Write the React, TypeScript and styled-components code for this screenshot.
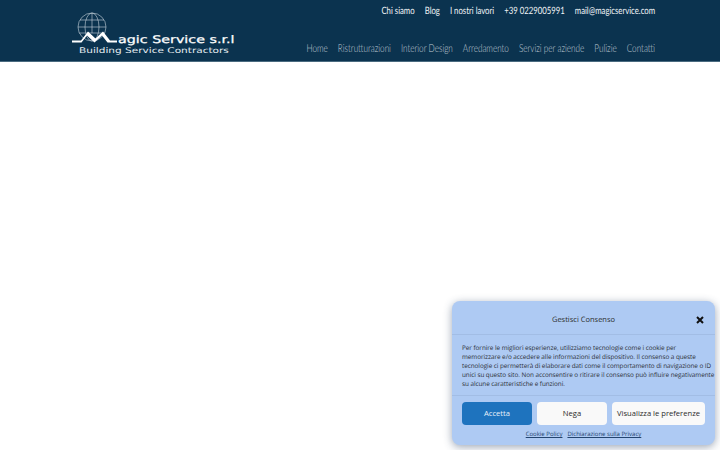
import { createGlobalStyle, styled } from 'styled-components';

const GlobalStyle = createGlobalStyle`
  html, body {
    margin: 0;
    padding: 0;
    background: #fff;
    height: 100%;
    text-rendering: geometricPrecision;
  }
  #root {
    height: 100%;
  }
`;

const Page = styled.div`
  position: relative;
  width: 720px;
  height: 450px;
  overflow: hidden;
  background: #fff;
`;

const Header = styled.header`
  height: 61px;
  background: #0b334f;
  border-bottom: 1px solid #4a6b80;
  padding: 0 65px 0 71px;
  display: flex;
  justify-content: space-between;
`;

const Logo = styled.div`
  flex: 0 0 168px;
  height: 46px;
  margin-top: 12px;
  position: relative;
  color: #fff;
`;

const LogoMark = styled.svg`
  position: absolute;
  left: 0;
  top: 0;
`;

const LogoName = styled.div`
  position: absolute;
  left: 47px;
  top: 21px;
  font: 400 10.5px/15px 'DejaVu Sans', sans-serif;
  -webkit-text-stroke: 0.25px #fff;
  white-space: nowrap;
  transform: scaleX(1.36);
  transform-origin: left center;
`;

const LogoTag = styled.div`
  position: absolute;
  left: 8px;
  top: 33px;
  font: 400 7.8px/12px 'DejaVu Sans', sans-serif;
  white-space: nowrap;
  color: #e6edf2;
  transform: scaleX(1.35);
  transform-origin: left center;
`;

const Navs = styled.div`
  flex: 1;
  min-width: 0;
  display: flex;
  flex-direction: column;
  align-items: flex-end;
`;

const TopNav = styled.nav`
  display: flex;
  gap: 13px;
  margin-top: 4px;
  transform: scaleX(0.775);
  transform-origin: right center;
`;

const TopLink = styled.a`
  font: 400 10px/15px 'Lato', sans-serif;
  color: #f2f5f7;
  white-space: nowrap;
`;

const MainNav = styled.nav`
  display: flex;
  flex-shrink: 0;
  gap: 13.5px;
  margin-top: 21px;
  transform: scaleX(0.74);
  transform-origin: right center;
`;

const MainLink = styled.a`
  font: 300 11px/17px 'Lato', sans-serif;
  color: #c4d0d9;
  white-space: nowrap;
`;

const Banner = styled.section`
  position: absolute;
  left: 452px;
  top: 301px;
  width: 263px;
  height: 144px;
  background: #aecaf3;
  border-radius: 8px;
  box-shadow: 0 2px 8px rgba(40, 60, 90, 0.45);
  font-family: 'Open Sans', sans-serif;
  color: #222;
`;

const BannerHead = styled.div`
  height: 34px;
  padding-top: 5px;
  box-sizing: border-box;
  border-bottom: 1px solid #a2bde5;
  display: flex;
  align-items: center;
  justify-content: center;
  position: relative;
  font-size: 7.5px;
  color: #2a2a2a;
`;

const CloseIcon = styled.svg`
  position: absolute;
  right: 11px;
  top: 15px;
`;

const BannerText = styled.p`
  margin: 0;
  padding: 8px 0 6px 10px;
  height: 46px;
  font-size: 6.35px;
  line-height: 9.1px;
  letter-spacing: -0.04px;
  white-space: nowrap;
  color: #2b2f36;
  border-bottom: 1px solid #a2bde5;
`;

const Actions = styled.div`
  display: grid;
  grid-template-columns: 70px 70px 93px;
  gap: 5px;
  padding: 6px 10px 0;
`;

const Action = styled.button<{ $primary?: boolean }>`
  height: 23px;
  border: 0;
  border-radius: 4px;
  padding: 0 0 1px;
  font: 400 7.6px 'Open Sans', sans-serif;
  background: ${(p) => (p.$primary ? '#1e73be' : '#f9f9f9')};
  color: ${(p) => (p.$primary ? '#e8f1fa' : '#2a2a2a')};
`;

const Links = styled.div`
  display: flex;
  justify-content: center;
  gap: 5px;
  margin-top: 4px;
`;

const PolicyLink = styled.a`
  font-size: 6px;
  line-height: 10px;
  color: #23446f;
  text-decoration: underline;
`;

export default function App() {
  return (
    <Page>
      <GlobalStyle />
      <Header>
        <Logo>
          <LogoMark width="60" height="34" viewBox="0 0 60 34" fill="none">
            <g stroke="#c9d5dd" strokeWidth="0.6">
              <circle cx="21" cy="15" r="14" />
              <ellipse cx="21" cy="15" rx="7" ry="14" />
              <path d="M21 1v20M7 15h28M9 8h24M8 21h26" />
            </g>
            <path
              d="M1 28.4h9l7-9 7.5 7 7.5-7 7 9h7v2h-9.5l-5.5-7-7.5 7-7.5-7-5.5 7H1z"
              fill="#fff"
            />
          </LogoMark>
          <LogoName>agic Service s.r.l</LogoName>
          <LogoTag>Building Service Contractors</LogoTag>
        </Logo>
        <Navs>
          <TopNav>
            <TopLink>Chi siamo</TopLink>
            <TopLink>Blog</TopLink>
            <TopLink>I nostri lavori</TopLink>
            <TopLink>+39 0229005991</TopLink>
            <TopLink>mail@magicservice.com</TopLink>
          </TopNav>
          <MainNav>
            <MainLink>Home</MainLink>
            <MainLink>Ristrutturazioni</MainLink>
            <MainLink>Interior Design</MainLink>
            <MainLink>Arredamento</MainLink>
            <MainLink>Servizi per aziende</MainLink>
            <MainLink>Pulizie</MainLink>
            <MainLink>Contatti</MainLink>
          </MainNav>
        </Navs>
      </Header>
      <Banner>
        <BannerHead>
          Gestisci Consenso
          <CloseIcon width="8" height="8" viewBox="0 0 8 8">
            <path d="M1 1l6 6M7 1L1 7" stroke="#111" strokeWidth="2" />
          </CloseIcon>
        </BannerHead>
        <BannerText>
          Per fornire le migliori esperienze, utilizziamo tecnologie come i cookie per
          <br />
          memorizzare e/o accedere alle informazioni del dispositivo. Il consenso a queste
          <br />
          tecnologie ci permetterà di elaborare dati come il comportamento di navigazione o ID
          <br />
          unici su questo sito. Non acconsentire o ritirare il consenso può influire negativamente
          <br />
          su alcune caratteristiche e funzioni.
        </BannerText>
        <Actions>
          <Action $primary>Accetta</Action>
          <Action>Nega</Action>
          <Action>Visualizza le preferenze</Action>
        </Actions>
        <Links>
          <PolicyLink>Cookie Policy</PolicyLink>
          <PolicyLink>Dichiarazione sulla Privacy</PolicyLink>
        </Links>
      </Banner>
    </Page>
  );
}
